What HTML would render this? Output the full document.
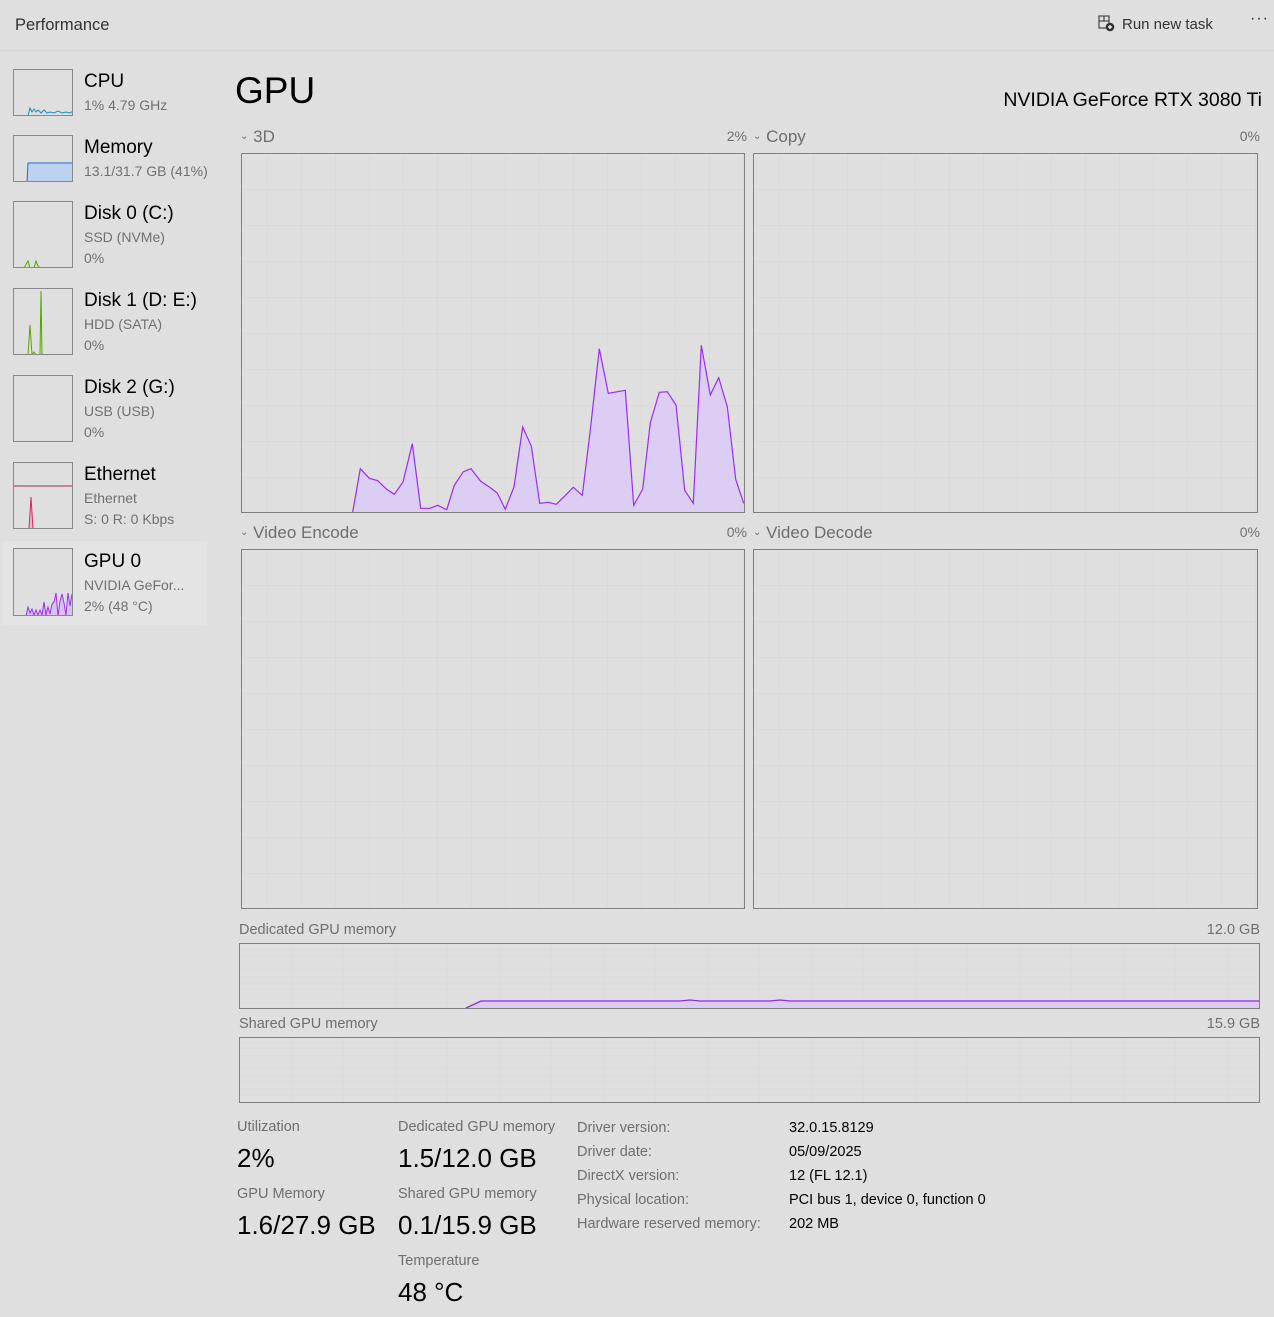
<!DOCTYPE html>
<html><head><meta charset="utf-8">
<style>
*{margin:0;padding:0;box-sizing:border-box}
body{width:1274px;height:1317px;background:#dfdfdf;font-family:"Liberation Sans",sans-serif;color:#000;position:relative;overflow:hidden}
.a{position:absolute;white-space:nowrap}
.g{color:#6e6e6e}
.hdr{position:absolute;left:0;top:0;width:1274px;height:51px;border-bottom:1px solid #d6d6d6}
.th{position:absolute;left:13px;width:60px;border:1px solid #888;background:#dfdfdf;overflow:hidden}
.t1{font-size:19px;left:84px}
.t2{font-size:14px;left:84px;color:#707070}
.sm{font-size:14px;color:#707070}
.lab{font-size:14.5px;color:#6e6e6e}
.val{font-size:26px}
</style></head><body>
<div class="hdr"></div>
<div class="a" style="left:15px;top:16px;font-size:16.5px;color:#333">Performance</div>
<svg class="a" style="left:1098px;top:15px" width="17" height="17" viewBox="0 0 17 17"><rect x="1" y="1" width="10" height="12" fill="none" stroke="#444" stroke-width="1.2"/><line x1="1" y1="6" x2="11" y2="6" stroke="#444" stroke-width="1.2"/><line x1="6" y1="1" x2="6" y2="6" stroke="#444" stroke-width="1.2"/><circle cx="12" cy="12" r="4.3" fill="#333"/><path d="M12 10v4M10 12h4" stroke="#fff" stroke-width="1.3"/></svg>
<div class="a" style="left:1122px;top:16px;font-size:15px;color:#333">Run new task</div>
<div class="a" style="left:1250px;top:10px;font-size:16px;color:#333;letter-spacing:1px">···</div>

<!-- sidebar -->
<div class="a" style="left:3px;top:541px;width:204px;height:84px;background:#e4e4e4"></div>
<div class="th" style="top:69px;height:47px"><svg width="60" height="47"><polyline points="14,46 16,38 18,42 20,39 22,42 24,40 27,43 30,40 33,43 36,42 40,43 44,41 48,43 52,42 56,43 59,41" fill="none" stroke="#1b8ec4" stroke-width="1"/></svg></div>
<div class="a t1" style="top:71px">CPU</div>
<div class="a t2" style="top:97px">1% 4.79 GHz</div>

<div class="th" style="top:135px;height:47px"><svg width="60" height="47"><path d="M13,46 L14,27 L59,27 L59,46 Z" fill="#bcd3ef" stroke="#1e6bd6" stroke-width="1"/></svg></div>
<div class="a t1" style="top:137px">Memory</div>
<div class="a t2" style="top:163px;width:127px;overflow:hidden">13.1/31.7 GB (41%)</div>

<div class="th" style="top:201px;height:67px"><svg width="60" height="67"><polyline points="10,66 14,59 16,66 20,66 22,59 24,64 26,66 30,66" fill="none" stroke="#5aa300" stroke-width="1"/></svg></div>
<div class="a t1" style="top:203px">Disk 0 (C:)</div>
<div class="a t2" style="top:229px">SSD (NVMe)</div>
<div class="a t2" style="top:250px">0%</div>

<div class="th" style="top:288px;height:67px"><svg width="60" height="67"><polyline points="14,66 16,36 18,66 20,63 22,66 26,66 27,2 28,66 30,66" fill="none" stroke="#5aa300" stroke-width="1"/></svg></div>
<div class="a t1" style="top:290px">Disk 1 (D: E:)</div>
<div class="a t2" style="top:316px">HDD (SATA)</div>
<div class="a t2" style="top:337px">0%</div>

<div class="th" style="top:375px;height:67px"></div>
<div class="a t1" style="top:377px">Disk 2 (G:)</div>
<div class="a t2" style="top:403px">USB (USB)</div>
<div class="a t2" style="top:424px">0%</div>

<div class="th" style="top:462px;height:67px"><svg width="60" height="67"><line x1="0" y1="23" x2="60" y2="23" stroke="#c2185b" stroke-width="1"/><polyline points="15,66 17,34 19,66" fill="#f3b5c9" stroke="#e0245e" stroke-width="1"/></svg></div>
<div class="a t1" style="top:464px">Ethernet</div>
<div class="a t2" style="top:490px">Ethernet</div>
<div class="a t2" style="top:511px">S: 0 R: 0 Kbps</div>

<div class="th" style="top:548px;height:68px"><svg width="60" height="68"><polyline points="12,67 14,58 16,64 18,60 20,66 22,61 24,66 26,61 28,66 30,53 32,66 34,58 36,65 38,55 40,53 42,44 44,67 46,52 48,45 50,54 52,66 54,44 56,57 58,45 60,62 60,67" fill="#d8c2f3" stroke="#9b30f0" stroke-width="1"/></svg></div>
<div class="a t1" style="top:551px">GPU 0</div>
<div class="a t2" style="top:577px">NVIDIA GeFor...</div>
<div class="a t2" style="top:598px">2% (48 °C)</div>

<!-- main -->
<div class="a" style="left:235px;top:70px;font-size:37px">GPU</div>
<div class="a" style="right:12px;top:89px;font-size:19.5px">NVIDIA GeForce RTX 3080 Ti</div>

<div class="a g" style="left:240px;top:127px;font-size:17px"><span style="font-size:10px;vertical-align:3px">⌄</span> 3D</div>
<div class="a sm" style="right:527px;top:128px">2%</div>
<div class="a g" style="left:753px;top:127px;font-size:17px"><span style="font-size:10px;vertical-align:3px">⌄</span> Copy</div>
<div class="a sm" style="right:14px;top:128px">0%</div>
<div class="a g" style="left:240px;top:523px;font-size:17px"><span style="font-size:10px;vertical-align:3px">⌄</span> Video Encode</div>
<div class="a sm" style="right:527px;top:524px">0%</div>
<div class="a g" style="left:753px;top:523px;font-size:17px"><span style="font-size:10px;vertical-align:3px">⌄</span> Video Decode</div>
<div class="a sm" style="right:14px;top:524px">0%</div>

<svg class="a" style="left:0;top:0" width="1274" height="1317">
<defs>
<pattern id="gp" x="267" y="153" width="34" height="36" patternUnits="userSpaceOnUse"><path d="M0 0V36M0 0H34" stroke="#d6d6d6" stroke-width="1" fill="none"/></pattern>
<pattern id="gp2" x="779" y="153" width="34" height="36" patternUnits="userSpaceOnUse"><path d="M0 0V36M0 0H34" stroke="#d6d6d6" stroke-width="1" fill="none"/></pattern>
<pattern id="mp" x="291" y="943" width="52" height="6.6" patternUnits="userSpaceOnUse"><path d="M0 0V7M0 0H52" stroke="#d9d9d9" stroke-width="1" fill="none"/></pattern>
</defs>
<rect x="241.5" y="153.5" width="503" height="359" fill="url(#gp)" stroke="#808080"/>
<rect x="753.5" y="153.5" width="504" height="359" fill="url(#gp2)" stroke="#808080"/>
<rect x="241.5" y="549.5" width="503" height="359" fill="url(#gp)" stroke="#808080"/>
<rect x="753.5" y="549.5" width="504" height="359" fill="url(#gp2)" stroke="#808080"/>
<polygon points="352.7,512 360.3,468.7 369.3,478.3 377.7,480.7 386.7,489.3 394.3,494.3 403,482 412.3,443.7 420.7,508.3 430,508.3 437.7,505.3 446.7,509.7 454.3,485.3 463.3,471.7 471,468.7 480.7,481.3 489.3,487 497.3,493 505.3,509.3 514,486.7 522.7,427 531.3,446 539.7,503.3 548.3,502.3 556.3,504.3 565,495.7 573.3,487.3 582.3,495.3 590.3,430 599.3,348.7 608.3,393.3 625.3,390.3 633.7,505.3 642.7,489 650.3,422.7 659.3,392.3 667.3,391.7 676,405 684.7,490.3 693.3,503.3 701.3,345.3 710.3,395 718.7,377.7 727.3,406.7 735.7,479.3 743.7,503.3 743.7,512" fill="#dacbf4" fill-opacity="0.95" stroke="none"/>
<polyline points="352.7,512 360.3,468.7 369.3,478.3 377.7,480.7 386.7,489.3 394.3,494.3 403,482 412.3,443.7 420.7,508.3 430,508.3 437.7,505.3 446.7,509.7 454.3,485.3 463.3,471.7 471,468.7 480.7,481.3 489.3,487 497.3,493 505.3,509.3 514,486.7 522.7,427 531.3,446 539.7,503.3 548.3,502.3 556.3,504.3 565,495.7 573.3,487.3 582.3,495.3 590.3,430 599.3,348.7 608.3,393.3 625.3,390.3 633.7,505.3 642.7,489 650.3,422.7 659.3,392.3 667.3,391.7 676,405 684.7,490.3 693.3,503.3 701.3,345.3 710.3,395 718.7,377.7 727.3,406.7 735.7,479.3 743.7,503.3" fill="none" stroke="#9a2cf5" stroke-width="1.2"/>
<rect x="239.5" y="943.5" width="1020" height="65" fill="url(#mp)" stroke="#808080"/>
<polygon points="466,1008 481,1001 1259,1001 1259,1008" fill="#dacbf4"/>
<polyline points="466,1008 481,1001 680,1001 690,1000 700,1001 770,1001 780,1000 790,1001 1259,1001" fill="none" stroke="#8a2be2" stroke-width="1.3"/>
<rect x="239.5" y="1037.5" width="1020" height="65" fill="url(#mp)" stroke="#808080"/>
</svg>
<div class="a lab" style="left:239px;top:922px">Dedicated GPU memory</div>
<div class="a lab" style="right:14px;top:922px">12.0 GB</div>
<div class="a lab" style="left:239px;top:1016px">Shared GPU memory</div>
<div class="a lab" style="right:14px;top:1016px">15.9 GB</div>

<div class="a lab" style="left:237px;top:1119px">Utilization</div>
<div class="a val" style="left:237px;top:1143px">2%</div>
<div class="a lab" style="left:237px;top:1186px">GPU Memory</div>
<div class="a val" style="left:237px;top:1210px">1.6/27.9 GB</div>
<div class="a lab" style="left:398px;top:1119px">Dedicated GPU memory</div>
<div class="a val" style="left:398px;top:1143px">1.5/12.0 GB</div>
<div class="a lab" style="left:398px;top:1186px">Shared GPU memory</div>
<div class="a val" style="left:398px;top:1210px">0.1/15.9 GB</div>
<div class="a lab" style="left:398px;top:1253px">Temperature</div>
<div class="a val" style="left:398px;top:1277px">48 °C</div>

<div class="a lab" style="left:577px;top:1116px;line-height:24px">Driver version:<br>Driver date:<br>DirectX version:<br>Physical location:<br>Hardware reserved memory:</div>
<div class="a" style="left:789px;top:1116px;line-height:24px;font-size:14.5px">32.0.15.8129<br>05/09/2025<br>12 (FL 12.1)<br>PCI bus 1, device 0, function 0<br>202 MB</div>
</body></html>
